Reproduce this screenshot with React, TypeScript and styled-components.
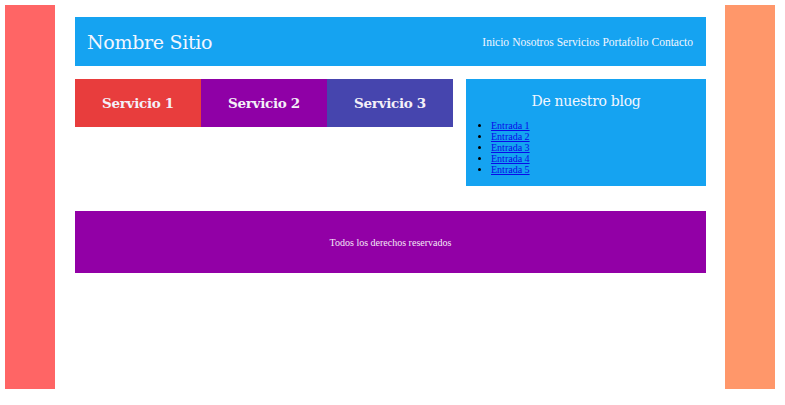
import styled, { createGlobalStyle } from "styled-components";

const GlobalStyle = createGlobalStyle`
  html, body {
    margin: 0;
    padding: 0;
    background: #ffffff;
  }
  body {
    font-family: "DejaVu Serif", "Liberation Serif", serif;
  }
`;

const servicios = [
  { label: "Servicio 1", color: "#e83d3d" },
  { label: "Servicio 2", color: "#8f00a6" },
  { label: "Servicio 3", color: "#4645ae" },
];

const menu = ["Inicio", "Nosotros", "Servicios", "Portafolio", "Contacto"];
const entradas = ["Entrada 1", "Entrada 2", "Entrada 3", "Entrada 4", "Entrada 5"];

const App = () => {
  return (
    <>
      <GlobalStyle />
      <Page>
        <SideBar $color="#ff6565" />
        <Main>
          <Header>
            <SiteName>Nombre Sitio</SiteName>
            <Nav>
              {menu.map((item) => (
                <span key={item}>{item}</span>
              ))}
            </Nav>
          </Header>
          <ContentRow>
            <Services>
              {servicios.map((s) => (
                <ServiceBox key={s.label} $color={s.color}>
                  {s.label}
                </ServiceBox>
              ))}
            </Services>
            <Blog>
              <BlogTitle>De nuestro blog</BlogTitle>
              <BlogList>
                {entradas.map((e) => (
                  <li key={e}>
                    <a href="#">{e}</a>
                  </li>
                ))}
              </BlogList>
            </Blog>
          </ContentRow>
          <Footer>Todos los derechos reservados</Footer>
        </Main>
        <SideBar $color="#ff976a" />
      </Page>
    </>
  );
};

const Page = styled.div`
  display: flex;
  width: 770px;
  height: 384px;
  padding: 5px;
`;

const SideBar = styled.aside<{ $color: string }>`
  width: 50px;
  flex-shrink: 0;
  background-color: ${(p) => p.$color};
`;

const Main = styled.main`
  flex: 1;
  display: flex;
  flex-direction: column;
  padding: 12px 19px 0 20px;
`;

const Header = styled.header`
  height: 49px;
  display: flex;
  align-items: center;
  justify-content: space-between;
  padding: 0 13px 0 12px;
  background-color: #15a3f1;
  color: #f2f6ff;
`;

const SiteName = styled.h1`
  margin: 0;
  font-family: "DejaVu Serif", serif;
  font-weight: normal;
  font-size: 19px;
  letter-spacing: -0.3px;
`;

const Nav = styled.nav`
  display: flex;
  gap: 3px;
  font-family: "Liberation Serif", serif;
  font-size: 11.5px;
`;

const ContentRow = styled.div`
  display: flex;
  align-items: flex-start;
  gap: 13px;
  margin-top: 13px;
`;

const Services = styled.div`
  flex: 1;
  display: flex;
`;

const ServiceBox = styled.div<{ $color: string }>`
  flex: 1;
  height: 48px;
  display: flex;
  align-items: center;
  justify-content: center;
  background-color: ${(p) => p.$color};
  color: #f4f0f8;
  font-family: "DejaVu Serif", serif;
  font-weight: bold;
  font-size: 13.5px;
  letter-spacing: -0.3px;
`;

const Blog = styled.section`
  width: 240px;
  height: 107px;
  box-sizing: border-box;
  background-color: #15a3f1;
  padding-top: 14px;
`;

const BlogTitle = styled.h2`
  margin: 0 0 11px;
  text-align: center;
  font-family: "DejaVu Serif", serif;
  font-weight: normal;
  font-size: 14px;
  color: #f2f6ff;
  letter-spacing: -0.3px;
`;

const BlogList = styled.ul`
  margin: 0;
  padding-left: 25px;
  font-family: "Liberation Serif", serif;
  font-size: 10px;
  line-height: 11px;
  color: #000;

  a {
    color: #0a0ae8;
  }
`;

const Footer = styled.footer`
  margin-top: 25px;
  height: 62px;
  display: flex;
  align-items: center;
  justify-content: center;
  background-color: #9200a6;
  color: #f4e8f6;
  font-family: "Liberation Serif", serif;
  font-size: 10px;
`;

export default App;
